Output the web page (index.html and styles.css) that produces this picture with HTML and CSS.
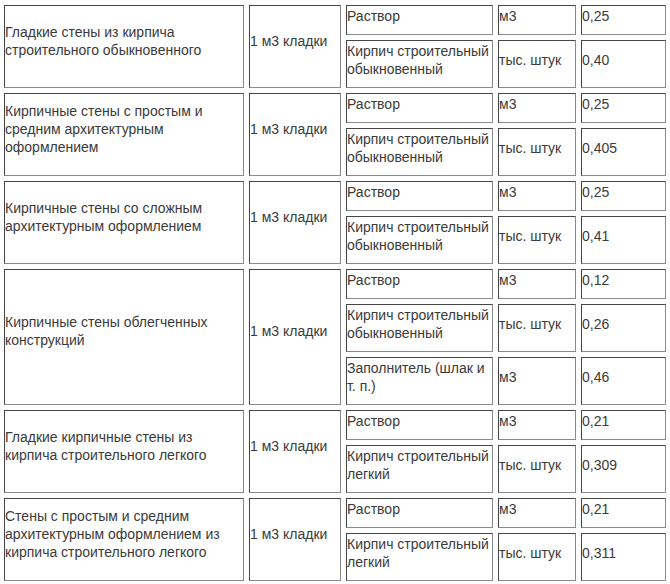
FILE: index.html
```html
<!DOCTYPE html>
<html lang="ru">
<head>
<meta charset="utf-8">
<title>Нормы расхода материалов</title>
<link rel="stylesheet" href="styles.css">
</head>
<body>
<table class="norms">
  <tbody>
    <tr>
      <td class="c1" rowspan="2">Гладкие стены из кирпича строительного обыкновенного</td>
      <td class="c2" rowspan="2">1 м3 кладки</td>
      <td class="c3">Раствор</td>
      <td class="c4">м3</td>
      <td class="c5">0,25</td>
    </tr>
    <tr>
      <td>Кирпич строительный обыкновенный</td>
      <td>тыс. штук</td>
      <td>0,40</td>
    </tr>
    <tr>
      <td class="name" rowspan="2">Кирпичные стены с простым и средним архитектурным оформлением</td>
      <td class="name" rowspan="2">1 м3 кладки</td>
      <td>Раствор</td>
      <td>м3</td>
      <td>0,25</td>
    </tr>
    <tr>
      <td>Кирпич строительный обыкновенный</td>
      <td>тыс. штук</td>
      <td>0,405</td>
    </tr>
    <tr>
      <td class="name" rowspan="2">Кирпичные стены со сложным архитектурным оформлением</td>
      <td class="name" rowspan="2">1 м3 кладки</td>
      <td>Раствор</td>
      <td>м3</td>
      <td>0,25</td>
    </tr>
    <tr>
      <td>Кирпич строительный обыкновенный</td>
      <td>тыс. штук</td>
      <td>0,41</td>
    </tr>
    <tr>
      <td class="name" rowspan="3">Кирпичные стены облегченных конструкций</td>
      <td class="name" rowspan="3">1 м3 кладки</td>
      <td>Раствор</td>
      <td>м3</td>
      <td>0,12</td>
    </tr>
    <tr>
      <td>Кирпич строительный обыкновенный</td>
      <td>тыс. штук</td>
      <td>0,26</td>
    </tr>
    <tr>
      <td>Заполнитель (шлак и т. п.)</td>
      <td>м3</td>
      <td>0,46</td>
    </tr>
    <tr>
      <td class="name" rowspan="2">Гладкие кирпичные стены из кирпича строительного легкого</td>
      <td class="name" rowspan="2">1 м3 кладки</td>
      <td>Раствор</td>
      <td>м3</td>
      <td>0,21</td>
    </tr>
    <tr>
      <td>Кирпич строительный легкий</td>
      <td>тыс. штук</td>
      <td>0,309</td>
    </tr>
    <tr>
      <td class="name" rowspan="2">Стены с простым и средним архитектурным оформлением из кирпича строительного легкого</td>
      <td class="name" rowspan="2">1 м3 кладки</td>
      <td>Раствор</td>
      <td>м3</td>
      <td>0,21</td>
    </tr>
    <tr>
      <td>Кирпич строительный легкий</td>
      <td>тыс. штук</td>
      <td>0,311</td>
    </tr>
  </tbody>
</table>
</body>
</html>
```
FILE: styles.css
```css
html {
  overflow: hidden;
  background: #ffffff;
}

body {
  margin: 0;
  font-family: "Liberation Sans", Arial, sans-serif;
  font-size: 14px;
  line-height: 18px;
  color: #3a3a3a;
}

.norms {
  table-layout: fixed;
  width: 672px;
  margin-left: -1px;
  border-collapse: separate;
  border-spacing: 5px;
}

.norms td {
  box-sizing: border-box;
  padding: 1px 0 9px 0;
  vertical-align: middle;
  text-align: left;
  border-style: solid;
  border-width: 1px;
  border-color: #454545 #8a8a8a #8a8a8a #454545;
}

.norms .c1 { width: 240px; }
.norms .c2 { width: 92px; }
.norms .c3 { width: 147px; }
.norms .c4 { width: 78px; }
.norms .c5 { width: 85px; }

.norms .c1,
.norms .c2,
.norms .name {
  padding-bottom: 13px;
}
```
